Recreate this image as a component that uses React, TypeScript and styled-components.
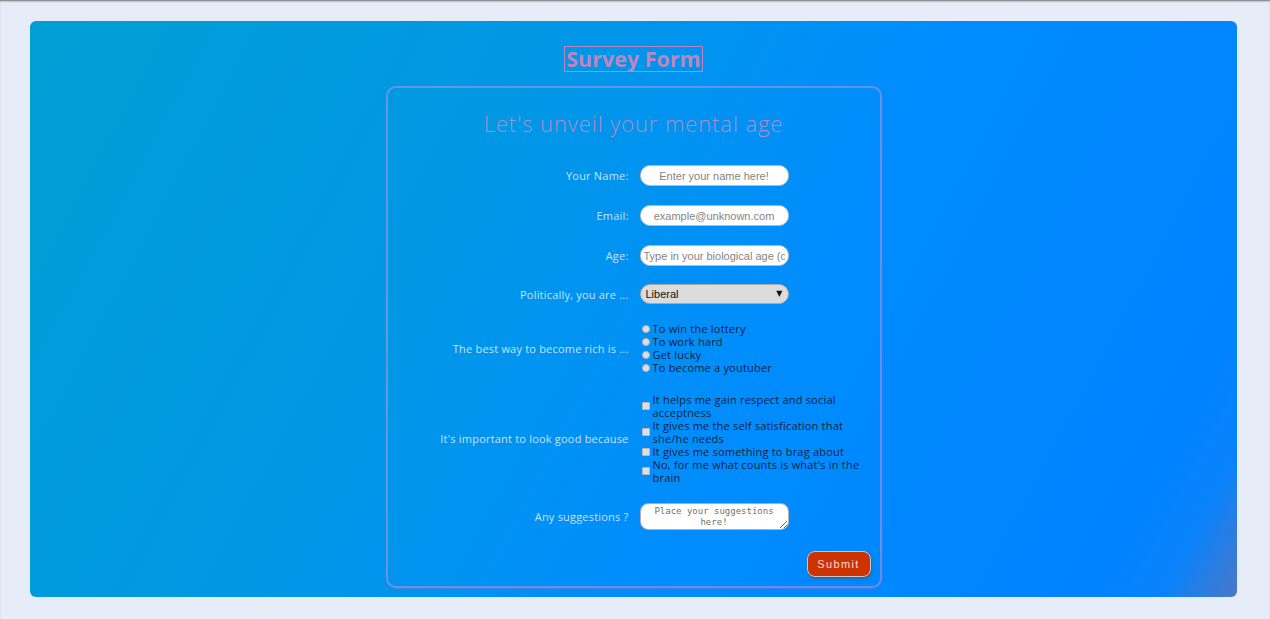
import React from "react";
import styled, { createGlobalStyle } from "styled-components";

const Global = createGlobalStyle`
  html, body { margin: 0; padding: 0; }
  body {
    background: #e6ecf8;
    font-family: "Open Sans", "Noto Sans", sans-serif;
    min-height: 619px;
    box-shadow: inset 0 2px 2px -1px #6d6d6d;
  }
  #root { padding-top: 21px; }
`;

const Stage = styled.main`
  width: 1207px;
  height: 576px;
  margin-left: 30px;
  border-radius: 6px;
  background: linear-gradient(118deg, #009ed4 0%, #0098e6 35%, #008cff 62%, #0083ff 90%, #0a82fb 95%, #4a78c8 100%);
  display: flex;
  flex-direction: column;
  align-items: center;
  box-sizing: border-box;
  padding-top: 25px;
`;

const Title = styled.h1`
  margin: 0;
  font-family: "Open Sans", sans-serif;
  font-weight: 700;
  font-size: 21.5px;
  line-height: 24px;
  letter-spacing: 0;
  color: #bd86bd;
  border: 1px solid #c283c0;
  padding: 0 1px;
`;

const Card = styled.form`
  margin-top: 14px;
  width: 496px;
  height: 502px;
  box-sizing: border-box;
  border: 2px solid rgba(200, 150, 220, 0.5);
  border-radius: 10px;
  box-shadow: 0 1px 2px rgba(150, 110, 190, 0.5);
  display: flex;
  flex-direction: column;
  padding-top: 21px;
`;

const Heading = styled.h2`
  margin: 0 0 28px;
  text-align: center;
  font-family: "Open Sans", sans-serif;
  font-weight: 300;
  font-size: 22px;
  line-height: 28px;
  letter-spacing: 0.9px;
  color: #b08cc6;
`;

const Row = styled.div<{ $gap?: number }>`
  display: flex;
  align-items: center;
  gap: 11px;
  margin-bottom: ${(p) => p.$gap ?? 19}px;
`;

const Label = styled.label`
  width: 241px;
  flex: none;
  text-align: right;
  font-size: 11px;
  line-height: 13px;
  color: rgba(235, 242, 255, 0.85);
  letter-spacing: 0.2px;
`;

const TextInput = styled.input<{ $center?: boolean }>`
  width: 149px;
  height: 21px;
  box-sizing: border-box;
  border: 1px solid #b9b9b9;
  border-radius: 10px;
  background: #fff;
  font-family: "Liberation Sans", Arial, sans-serif;
  font-size: 11px;
  padding: 0 3px;
  text-align: ${(p) => (p.$center ? "center" : "left")};
  outline: none;
  &::placeholder { color: #858585; }
`;

const SelectWrap = styled.div`
  position: relative;
  width: 149px;
  height: 20px;
  display: flex;
`;

const Select = styled.select`
  appearance: none;
  width: 100%;
  height: 20px;
  box-sizing: border-box;
  border: 1px solid #a9a9a9;
  border-radius: 10px;
  background: #dcdcdc;
  font-family: "Liberation Sans", Arial, sans-serif;
  font-size: 11px;
  color: #111;
  padding: 0 5px;
  outline: none;
`;

const Arrow = styled.span`
  position: absolute;
  right: 6px;
  top: 50%;
  transform: translateY(-50%);
  font-family: "DejaVu Sans", sans-serif;
  font-size: 8px;
  line-height: 8px;
  color: #111;
  pointer-events: none;
`;

const Options = styled.div`
  width: 222px;
  display: flex;
  flex-direction: column;
`;

const Option = styled.label`
  display: flex;
  align-items: center;
  gap: 3px;
  padding-left: 2px;
  font-size: 11px;
  line-height: 13px;
  color: #17223a;
  letter-spacing: 0.2px;
`;

const Mark = styled.input<{ $round?: boolean }>`
  appearance: none;
  margin: 0;
  flex: none;
  width: 8px;
  height: 8px;
  box-sizing: border-box;
  border: 1px solid #b8b8b8;
  border-radius: ${(p) => (p.$round ? "50%" : "1px")};
  background: #dedede;
`;

const TextArea = styled.textarea`
  width: 149px;
  height: 27px;
  box-sizing: border-box;
  border: 1px solid #b0b0b0;
  border-radius: 8px;
  background: #fff;
  font-family: "DejaVu Sans Mono", "Liberation Mono", monospace;
  font-size: 9px;
  line-height: 11px;
  text-align: center;
  padding: 2px 8px;
  outline: none;
  &::placeholder { color: #6f6f6f; }
`;

const Footer = styled.div`
  display: flex;
  justify-content: flex-end;
  padding-right: 9px;
`;

const Submit = styled.button`
  width: 64px;
  height: 26px;
  border: 1px solid #c9c9c9;
  border-radius: 8px;
  background: #cc3300;
  color: #f3dcd6;
  font-family: "Liberation Sans", Arial, sans-serif;
  font-size: 11px;
  letter-spacing: 1.4px;
  box-shadow: 1px 2px 2px rgba(80, 80, 80, 0.6);
`;

export default function App() {
  return (
    <>
      <Global />
      <Stage>
        <Title>Survey Form</Title>
        <Card onSubmit={(e) => e.preventDefault()}>
          <Heading>Let's unveil your mental age</Heading>
          <Row>
            <Label>Your Name:</Label>
            <TextInput $center placeholder="Enter your name here!" />
          </Row>
          <Row>
            <Label>Email:</Label>
            <TextInput $center placeholder="example@unknown.com" />
          </Row>
          <Row $gap={18}>
            <Label>Age:</Label>
            <TextInput placeholder="Type in your biological age (or not)" />
          </Row>
          <Row $gap={18}>
            <Label>Politically, you are ...</Label>
            <SelectWrap>
              <Select defaultValue="liberal">
                <option value="liberal">Liberal</option>
                <option value="conservative">Conservative</option>
              </Select>
              <Arrow>▼</Arrow>
            </SelectWrap>
          </Row>
          <Row $gap={19}>
            <Label>The best way to become rich is ...</Label>
            <Options>
              {["To win the lottery", "To work hard", "Get lucky", "To become a youtuber"].map((t) => (
                <Option key={t}>
                  <Mark $round type="radio" name="rich" />
                  {t}
                </Option>
              ))}
            </Options>
          </Row>
          <Row $gap={19}>
            <Label>It's important to look good because</Label>
            <Options>
              {[
                "It helps me gain respect and social acceptness",
                "It gives me the self satisfication that she/he needs",
                "It gives me something to brag about",
                "No, for me what counts is what's in the brain",
              ].map((t) => (
                <Option key={t}>
                  <Mark type="checkbox" />
                  <span>{t}</span>
                </Option>
              ))}
            </Options>
          </Row>
          <Row $gap={21}>
            <Label>Any suggestions ?</Label>
            <TextArea placeholder="Place your suggestions here!" />
          </Row>
          <Footer>
            <Submit type="submit">Submit</Submit>
          </Footer>
        </Card>
      </Stage>
    </>
  );
}
